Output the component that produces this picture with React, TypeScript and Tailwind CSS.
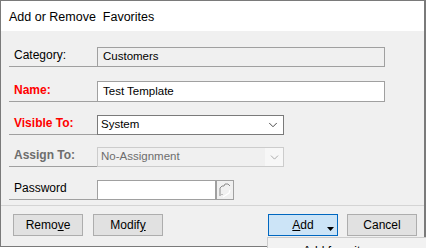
import { ChevronDown } from "lucide-react";

function Label({ text, tone }: { text: string; tone: "plain" | "red" | "gray" }) {
  const color =
    tone === "red" ? "text-[#ff0000] font-bold" : tone === "gray" ? "text-[#6d6d6d] font-bold" : "text-black";
  return (
    <div className={`w-[88px] h-[20px] border-b border-[#a0a0a0] pl-[5px] flex items-end pb-[2px] text-[12px] ${color}`}>
      {text}
    </div>
  );
}

function Btn({ children, primary }: { children: React.ReactNode; primary?: boolean }) {
  return (
    <div
      className={`relative w-[70px] h-[22px] flex items-center justify-center text-[12px] border ${
        primary ? "bg-[#cce4f7] border-[#0067c0]" : "bg-[#e1e1e1] border-[#adadad]"
      }`}
    >
      {children}
      {primary && (
        <svg className="absolute right-[3px] bottom-[4px]" width="7" height="4" viewBox="0 0 7 4">
          <path d="M0 0h7L3.5 4z" fill="#000" />
        </svg>
      )}
    </div>
  );
}

export default function App() {
  return (
    <div className="relative w-[426px] h-[248px] overflow-hidden bg-white font-['Liberation_Sans',Arial,sans-serif] text-black">
      <div className="flex flex-col w-[426px] h-[247px] border-l border-r-2 border-t border-b border-[#7a7a7a] bg-[#f0f0f0]">
        <div className="h-[30px] bg-white pl-[8px] pt-[7px] text-[12.5px] whitespace-pre">Add or Remove  Favorites</div>

        <div className="flex flex-col pl-[8px] pt-[16px] h-[175px] border-b border-[#d4d4d4]">
          <div className="flex items-end">
            <Label text="Category:" tone="plain" />
            <div className="w-[288px] h-[20px] border border-[#a0a0a0] bg-[#f0f0f0] pl-[5px] flex items-center text-[11.5px]">
              Customers
            </div>
          </div>

          <div className="flex items-end mt-[14px]">
            <Label text="Name:" tone="red" />
            <div className="w-[288px] h-[21px] border border-[#a0a0a0] bg-white pl-[5px] flex items-center text-[11.5px]">
              Test Template
            </div>
          </div>

          <div className="flex items-end mt-[13px]">
            <Label text="Visible To:" tone="red" />
            <div className="w-[187px] h-[20px] border border-[#7a7a7a] bg-white pl-[3px] pr-[3px] flex items-center justify-between text-[11.5px]">
              <span>System</span>
              <ChevronDown size={14} strokeWidth={1.5} className="text-[#333]" />
            </div>
          </div>

          <div className="flex items-end mt-[12px]">
            <Label text="Assign To:" tone="gray" />
            <div className="w-[187px] h-[20px] border border-[#cccccc] bg-[#f0f0f0] flex items-stretch text-[11.5px] text-[#6d6d6d]">
              <span className="flex-1 pl-[3px] flex items-center">No-Assignment</span>
              <span className="w-[18px] bg-[#f7f7f7] flex items-center justify-center">
                <ChevronDown size={13} strokeWidth={1.5} className="text-[#9a9a9a]" />
              </span>
            </div>
          </div>

          <div className="flex items-end mt-[13px]">
            <Label text="Password" tone="plain" />
            <div className="w-[119px] h-[20px] border border-[#a0a0a0] bg-white" />
            <div className="w-[18px] h-[20px] border border-[#a0a0a0] bg-[#f0f0f0] flex items-center justify-center">
              <svg width="14" height="16" viewBox="0 0 14 16" fill="none">
                <path d="M2 14V6l2-2h2l1-2h3l2 2" stroke="#8a8a8a" strokeWidth="1" />
                <path d="M12 8l-1 3-6 4" stroke="#ffffff" strokeWidth="1.2" />
                <path d="M4 12v1" stroke="#8a8a8a" strokeWidth="1" />
              </svg>
            </div>
          </div>
        </div>

        <div className="flex items-start pt-[8px] pl-[12px] pr-[7px]">
          <Btn>
            <span>
              Remo<span className="underline">v</span>e
            </span>
          </Btn>
          <div className="ml-[10px]">
            <Btn>
              <span>
                Modif<span className="underline">y</span>
              </span>
            </Btn>
          </div>
          <div className="ml-auto">
            <Btn primary>
              <span>
                <span className="underline">A</span>dd
              </span>
            </Btn>
          </div>
          <div className="ml-[9px]">
            <Btn>Cancel</Btn>
          </div>
        </div>
      </div>

      <div className="absolute left-[267px] top-[237px] w-[170px] h-[20px] bg-[#f2f2f2] border border-[#cccccc] pl-[35px] pt-[4px] text-[12px]">
        Add favorite...
      </div>
    </div>
  );
}
